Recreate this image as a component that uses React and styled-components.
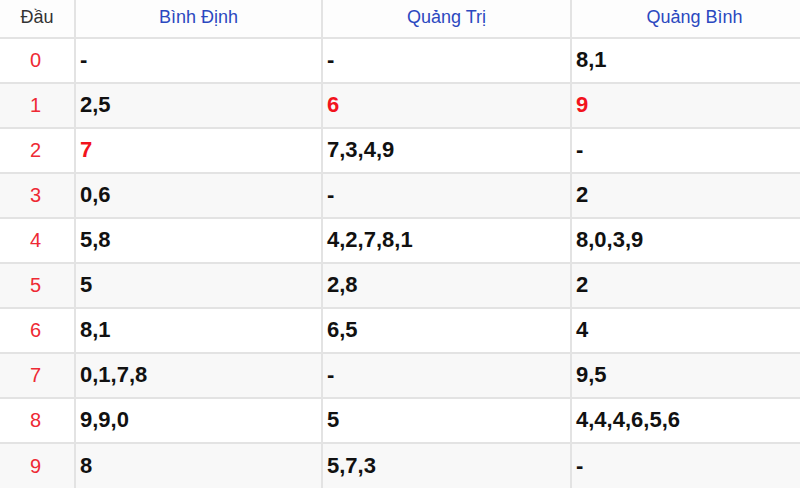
import React from "react";
import styled, { createGlobalStyle } from "styled-components";

const GlobalStyle = createGlobalStyle`
  html, body {
    margin: 0;
    padding: 0;
    background: #ffffff;
    overflow: hidden;
  }
  body {
    font-family: "Liberation Sans", Arial, sans-serif;
  }
`;

const provinces = ["Bình Định", "Quảng Trị", "Quảng Bình"];
const colWidths = [75, 247, 249, 247];

// each cell: [text, highlighted]
const rows = [
  [["-"], ["-"], ["8,1"]],
  [["2,5"], ["6", true], ["9", true]],
  [["7", true], ["7,3,4,9"], ["-"]],
  [["0,6"], ["-"], ["2"]],
  [["5,8"], ["4,2,7,8,1"], ["8,0,3,9"]],
  [["5"], ["2,8"], ["2"]],
  [["8,1"], ["6,5"], ["4"]],
  [["0,1,7,8"], ["-"], ["9,5"]],
  [["9,9,0"], ["5"], ["4,4,4,6,5,6"]],
  [["8"], ["5,7,3"], ["-"]],
];

export default function App() {
  return (
    <>
      <GlobalStyle />
      <Table>
        <colgroup>
          {colWidths.map((w, i) => (
            <col key={i} style={{ width: w }} />
          ))}
        </colgroup>
        <thead>
          <HeadRow>
            <HeadCell $first>Đầu</HeadCell>
            {provinces.map((p) => (
              <HeadCell key={p}>{p}</HeadCell>
            ))}
          </HeadRow>
        </thead>
        <tbody>
          {rows.map((row, i) => (
            <Row key={i} $striped={i % 2 === 1}>
              <IndexCell>{i}</IndexCell>
              {row.map(([text, hot], j) => (
                <ValueCell key={j} $hot={hot}>
                  {text}
                </ValueCell>
              ))}
            </Row>
          ))}
        </tbody>
      </Table>
    </>
  );
}

const Table = styled.table`
  width: 818px;
  margin: 0;
  border-collapse: collapse;
  table-layout: fixed;

  tr > *:first-child {
    border-left: none;
  }
`;

const HeadRow = styled.tr`
  height: 38px;
  background: #fdfdfd;
`;

const HeadCell = styled.th`
  border: 2px solid #e3e3e3;
  border-top: none;
  font-weight: normal;
  font-size: 18px;
  color: ${({ $first }) => ($first ? "#333333" : "#2b48c0")};
  text-align: center;
  padding: 0 0 2px;
`;

const Row = styled.tr`
  height: 45px;
  background: ${({ $striped }) => ($striped ? "#f8f8f8" : "#ffffff")};

  &:last-child td {
    border-bottom: none;
  }
`;

const IndexCell = styled.td`
  border: 2px solid #e3e3e3;
  text-align: center;
  color: #ee2a34;
  font-size: 20px;
  padding: 0 3px 0 0;
`;

const ValueCell = styled.td`
  border: 2px solid #e3e3e3;
  padding: 0 4px 1px;
  font-size: 22px;
  font-weight: bold;
  color: ${({ $hot }) => ($hot ? "#f2131d" : "#111111")};
`;
